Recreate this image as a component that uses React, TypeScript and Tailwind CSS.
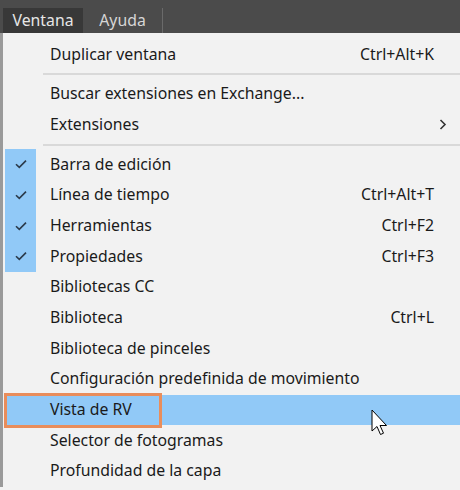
import React from "react";

type Item = { label: string; shortcut?: string; checked?: boolean; submenu?: boolean; hot?: boolean };

const groups: Item[][] = [
  [{ label: "Duplicar ventana", shortcut: "Ctrl+Alt+K" }],
  [{ label: "Buscar extensiones en Exchange..." }, { label: "Extensiones", submenu: true }],
  [
    { label: "Barra de edición", checked: true },
    { label: "Línea de tiempo", shortcut: "Ctrl+Alt+T", checked: true },
    { label: "Herramientas", shortcut: "Ctrl+F2", checked: true },
    { label: "Propiedades", shortcut: "Ctrl+F3", checked: true },
    { label: "Bibliotecas CC" },
    { label: "Biblioteca", shortcut: "Ctrl+L" },
    { label: "Biblioteca de pinceles" },
    { label: "Configuración predefinida de movimiento" },
    { label: "Vista de RV", hot: true },
    { label: "Selector de fotogramas" },
    { label: "Profundidad de la capa" },
  ],
];

function Check() {
  return (
    <svg width="12" height="10" viewBox="0 0 12 10" className="text-[#2b3a4a]">
      <path d="M1 5.2 L4.3 8.4 L11 1.6" fill="none" stroke="currentColor" strokeWidth="1.6" />
    </svg>
  );
}

function Chevron() {
  return (
    <svg width="8" height="11" viewBox="0 0 8 11" className="text-[#333]">
      <path d="M1.5 1 L6 5.5 L1.5 10" fill="none" stroke="currentColor" strokeWidth="1.6" />
    </svg>
  );
}

function Cursor() {
  return (
    <svg width="20" height="30" viewBox="0 0 20 30" className="absolute left-[366px] top-[14px]">
      <path d="M1 1 L1 22 L6 17.5 L9.5 25.5 L12.5 24.2 L9 16.5 L15.5 16.5 Z" fill="#fff" stroke="#000" strokeWidth="1" strokeLinejoin="round" />
    </svg>
  );
}

function Row({ item }: { item: Item }) {
  return (
    <div className={`relative flex h-[30.7px] items-center ${item.hot ? "bg-[#91c9f7]" : ""}`}>
      <div className={`flex h-full w-[31px] items-center justify-center ${item.checked ? "bg-[#91c9f7]" : ""}`}>
        {item.checked && <Check />}
      </div>
      <div className="ml-[14px] flex-1 text-[#1a1a1a]">{item.label}</div>
      {item.shortcut && <div className="mr-[26px] text-[#1a1a1a]">{item.shortcut}</div>}
      {item.submenu && (
        <div className="mr-[13px]">
          <Chevron />
        </div>
      )}
      {item.hot && (
        <>
          <div className="pointer-events-none absolute -left-[1px] top-[-2px] h-[35px] w-[158px] border-[3px] border-[#e98d5b]" />
          <Cursor />
        </>
      )}
    </div>
  );
}

export default function App() {
  return (
    <div
      className="h-[490px] w-[460px] overflow-hidden bg-[#f2f2f2] text-[15.8px]"
      style={{ fontFamily: '"Noto Sans", "Open Sans", sans-serif' }}
    >
      <div className="flex h-[33px] items-end bg-[#4b4b4b] pl-[3px]">
        <div className="flex h-[25px] w-[80px] items-center justify-center bg-[#383838] text-[#e6e6e6]">Ventana</div>
        <div className="flex h-[25px] w-[80px] items-center justify-center border-r border-[#6a6a6a] text-[#d6d6d6]">Ayuda</div>
      </div>
      <div className="flex">
        <div className="w-[3px] shrink-0 bg-[#9a9a9a]" />
        <div className="flex-1 pl-[2px] pt-[6px]">
          {groups.map((g, gi) => (
            <div key={gi}>
              {gi > 0 && <div className="my-[3.5px] ml-[38px] h-[2px] bg-[#d9d9d9]" />}
              {g.map((it) => (
                <Row key={it.label} item={it} />
              ))}
            </div>
          ))}
        </div>
      </div>
    </div>
  );
}
